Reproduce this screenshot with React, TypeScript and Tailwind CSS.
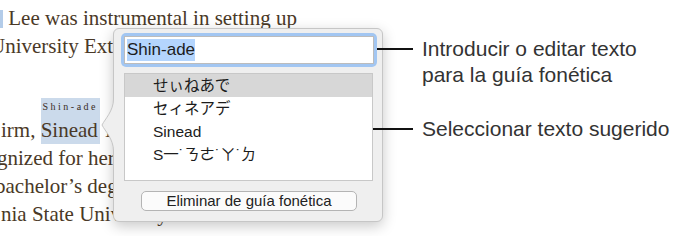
import * as React from "react"

const suggestions = ["せぃねあで", "セィネアデ", "Sinead", "S一˙ㄋㄜ˙ㄚ˙ㄉ"]

function PhoneticPopover() {
  return (
    <div className="relative w-[270px] h-[194px] shrink-0 rounded-[6px] border border-[#c6c6c6] bg-[#efefef] shadow-[0_4px_14px_rgba(0,0,0,0.22)] pt-[4px] font-['Liberation_Sans','Noto_Sans_CJK_JP',sans-serif]">
      {/* arrow pointing at the word */}
      <svg className="absolute left-[-13px] top-[70px]" width="14" height="52" viewBox="0 0 14 52">
        <path d="M12.5,0 C12.5,12 4,20 1,26 C4,32 12.5,40 12.5,52 L14,52 L14,0 Z" fill="#efefef" />
        <path d="M12.5,0 C12.5,12 4,20 1,26 C4,32 12.5,40 12.5,52" fill="none" stroke="#c6c6c6" strokeWidth="1" />
      </svg>

      <div className="ml-[7px] w-[256px] h-[34px] rounded-[5px] bg-[#a2c6f2] p-[3px]">
        <div className="flex h-[28px] items-center border border-[#bcbcbc] bg-white pl-[2px]">
          <span className="bg-[#b4d5fd] text-[17px] leading-[22px] text-[#1c1c1c]">Shin-ade</span>
        </div>
      </div>

      <div className="mt-[6px] ml-[10px] w-[249px] h-[108px] border border-[#c8c8c8] bg-white">
        {suggestions.map((s, i) => (
          <div
            key={s}
            className={
              i === 0
                ? "h-[23px] pl-[28px] text-[15.5px] leading-[23px] text-[#1c1c1c] bg-[#d7d7d7] font-['Liberation_Sans','Noto_Sans_CJK_JP',sans-serif]"
                : i === 3
                  ? "h-[23px] pl-[28px] text-[15.5px] leading-[23px] text-[#1c1c1c] font-['Liberation_Sans','Noto_Sans_CJK_TC',sans-serif]"
                  : "h-[23px] pl-[28px] text-[15.5px] leading-[23px] text-[#1c1c1c] font-['Liberation_Sans','Noto_Sans_CJK_JP',sans-serif]"
            }
          >
            {s}
          </div>
        ))}
      </div>

      <div className="mt-[10px] ml-[27px] w-[216px] h-[20px] rounded-[5px] border border-[#b4b4b4] bg-[#fbfbfb] text-center text-[15px] leading-[18px] text-[#222]">
        Eliminar de guía fonética
      </div>
    </div>
  )
}

function Callouts() {
  return (
    <div className="relative z-10 flex flex-col font-['Liberation_Sans',sans-serif] text-[21px] leading-[26px] text-[#333] whitespace-nowrap">
      <div className="mt-[8px] flex items-start">
        <div className="mt-[12px] ml-[-6px] w-[36px] h-[1.5px] bg-[#111]" />
        <div className="ml-[9px]">
          <div>Introducir o editar texto</div>
          <div>para la guía fonética</div>
        </div>
      </div>
      <div className="mt-[28px] flex items-start">
        <div className="mt-[12px] ml-[-10px] w-[40px] h-[1.5px] bg-[#111]" />
        <div className="ml-[9px]">Seleccionar texto sugerido</div>
      </div>
    </div>
  )
}

export default function App() {
  return (
    <div className="relative w-[674px] h-[236px] overflow-hidden bg-white">
      <div className="pt-[4px] whitespace-nowrap font-['Liberation_Serif',serif] text-[21px] leading-[28px] text-[#4a3927]">
        <div>
          <span className="inline-block w-[3px] h-[18px] bg-[#b3cce9] align-[-3px]" /> Lee was instrumental in setting up
        </div>
        <div className="ml-[-10px]">University Extension</div>
        <div className="mt-[56px] ml-[1px]">
          irm,{" "}
          <span className="relative inline-block bg-[#cbdaeb] pr-[2px]">
            Sinead
            <span className="absolute bottom-full left-0 right-0 h-[18px] bg-[#cbdaeb] text-center text-[10px] leading-[18px] tracking-[2.5px] text-[#3a2c1e]">
              Shin-ade
            </span>
          </span>{" "}
          Lee was
        </div>
        <div className="ml-[-3px]">gnized for her work</div>
        <div className="ml-[-5px]">bachelor’s degree in</div>
        <div className="ml-[1px]">nia State University at Chico.</div>
      </div>

      {/* popover overlay with its callout labels */}
      <div className="absolute left-[113px] top-[28px] flex">
        <PhoneticPopover />
        <Callouts />
      </div>
    </div>
  )
}
